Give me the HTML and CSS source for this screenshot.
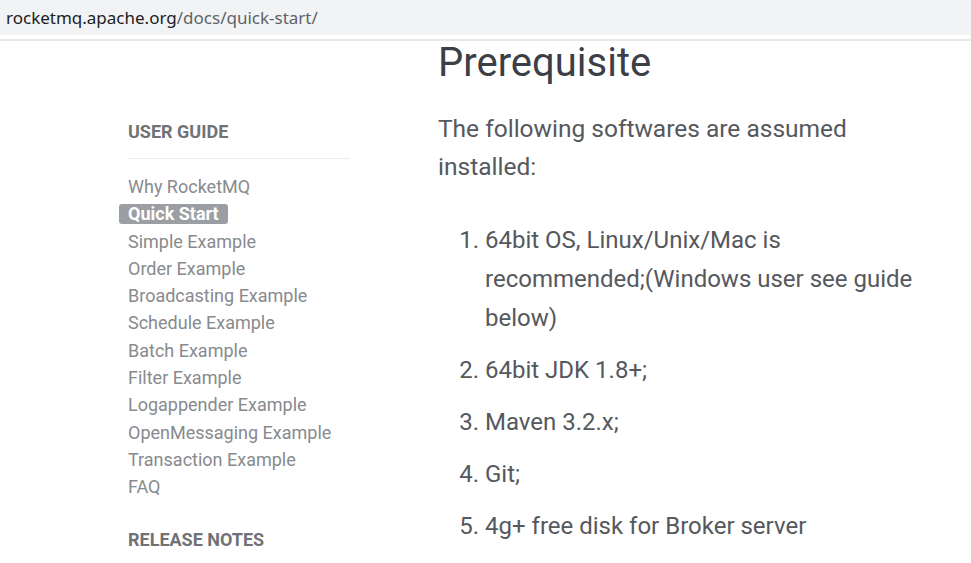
FILE: index.html
```html
<!DOCTYPE html>
<html lang="en">
<head>
<meta charset="utf-8">
<title>Quick Start - RocketMQ</title>
<link rel="stylesheet" href="styles.css">
</head>
<body>
<div class="addressbar"><span class="host">rocketmq.apache.org</span><span class="path">/docs/quick-start/</span></div>
<div class="rule"></div>
<div class="page">
  <aside class="sidebar">
    <div class="nav-title">USER GUIDE</div>
    <ul class="nav-list">
      <li>Why RocketMQ</li>
      <li class="active"><span>Quick Start</span></li>
      <li>Simple Example</li>
      <li>Order Example</li>
      <li>Broadcasting Example</li>
      <li>Schedule Example</li>
      <li>Batch Example</li>
      <li>Filter Example</li>
      <li>Logappender Example</li>
      <li>OpenMessaging Example</li>
      <li>Transaction Example</li>
      <li>FAQ</li>
    </ul>
    <div class="nav-title second">RELEASE NOTES</div>
  </aside>
  <main class="content">
    <h1>Prerequisite</h1>
    <p>The following softwares are assumed installed:</p>
    <ol>
      <li>64bit OS, Linux/Unix/Mac is recommended;&#8288;(Windows user see guide below)</li>
      <li>64bit JDK 1.8+;</li>
      <li>Maven 3.2.x;</li>
      <li>Git;</li>
      <li>4g+ free disk for Broker server</li>
    </ol>
  </main>
</div>
</body>
</html>
```
FILE: styles.css
```css
html, body {
  margin: 0;
  padding: 0;
  height: 100%;
  overflow: hidden;
  background: #ffffff;
}
body {
  font-family: Roboto, "Liberation Sans", Arial, sans-serif;
}
.addressbar {
  height: 35px;
  background: #f1f3f4;
  box-sizing: border-box;
  padding: 7px 0 0 6px;
  font-family: "Noto Sans", "Liberation Sans", Arial, sans-serif;
  font-size: 17px;
  line-height: 22px;
  white-space: nowrap;
}
.host { color: #202124; }
.path { color: #5f6368; }
.rule {
  margin-top: 4px;
  height: 2px;
  background: #e8e8e8;
}
.page {
  display: flex;
  padding-left: 128px;
}
.sidebar {
  width: 222px;
  flex: none;
  padding-top: 80px;
  margin-right: 88px;
}
.nav-title {
  font-size: 18px;
  font-weight: 700;
  line-height: 22px;
  color: #707276;
  padding-bottom: 15px;
  border-bottom: 1px solid #eeeeee;
}
.nav-title.second {
  border-bottom: none;
  margin-top: 28px;
}
.nav-list {
  list-style: none;
  margin: 14px 0 0;
  padding: 0;
}
.nav-list li {
  font-size: 18px;
  line-height: 27.3px;
  color: #888a8e;
  white-space: nowrap;
}
.nav-list li.active span {
  display: inline-block;
  margin-left: -9px;
  padding: 0 9px 0 9px;
  height: 20px;
  line-height: 20px;
  background: #9b9ea3;
  color: #ffffff;
  font-weight: 700;
  border-radius: 3px;
}
.content {
  width: 505px;
  flex: none;
  color: #55585d;
}
.content h1 {
  margin: 0;
  font-size: 40px;
  line-height: 44px;
  font-weight: 400;
  color: #3c4046;
}
.content p {
  margin: 25px 0 0;
  font-size: 24.5px;
  line-height: 38px;
}
.content ol {
  margin: 35px 0 0;
  padding-left: 47px;
}
.content ol li {
  font-size: 24px;
  line-height: 39px;
  margin-bottom: 13px;
  padding-left: 0;
}
```
